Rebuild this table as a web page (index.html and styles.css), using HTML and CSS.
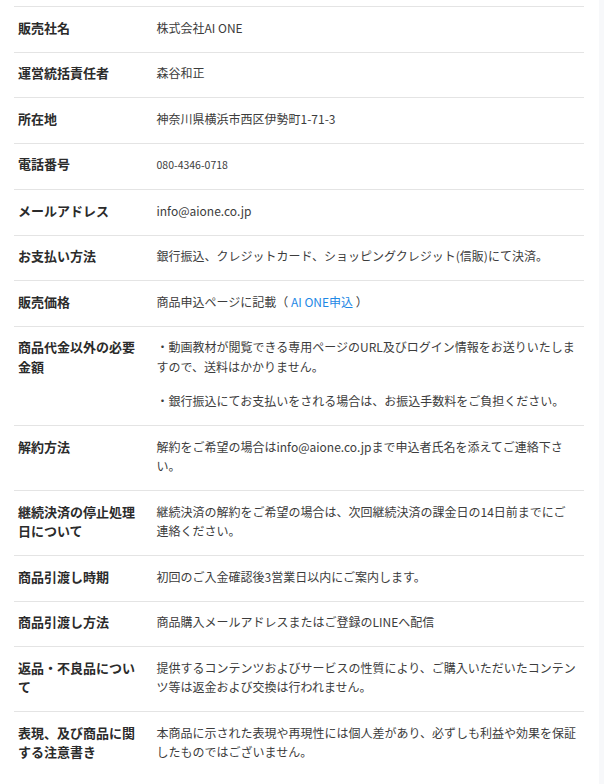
FILE: index.html
```html
<!DOCTYPE html>
<html lang="ja">
<head>
<meta charset="utf-8">
<title>特定商取引法に基づく表記</title>
<link rel="stylesheet" href="styles.css">
</head>
<body>
<div class="page">
  <table class="law">
    <tbody>
      <tr><th>販売社名</th><td>株式会社AI ONE</td></tr>
      <tr><th>運営統括責任者</th><td>森谷和正</td></tr>
      <tr><th>所在地</th><td>神奈川県横浜市西区伊勢町1-71-3</td></tr>
      <tr><th>電話番号</th><td><span class="tel">080-4346-0718</span></td></tr>
      <tr><th>メールアドレス</th><td>info@aione.co.jp</td></tr>
      <tr><th>お支払い方法</th><td>銀行振込、クレジットカード、ショッピングクレジット(信販)にて決済。</td></tr>
      <tr><th>販売価格</th><td>商品申込ページに記載（ <a class="link" href="#">AI ONE申込</a> ）</td></tr>
      <tr><th>商品代金以外の必要金額</th><td><p class="para">・動画教材が閲覧できる専用ページのURL及びログイン情報をお送りいたしますので、送料はかかりません。</p><p class="para">・銀行振込にてお支払いをされる場合は、お振込手数料をご負担ください。</p></td></tr>
      <tr><th>解約方法</th><td>解約をご希望の場合はinfo@aione.co.jpまで申込者氏名を添えてご連絡下さい。</td></tr>
      <tr><th>継続決済の停止処理日について</th><td>継続決済の解約をご希望の場合は、次回継続決済の課金日の14日前までにご連絡ください。</td></tr>
      <tr><th>商品引渡し時期</th><td>初回のご入金確認後3営業日以内にご案内します。</td></tr>
      <tr><th>商品引渡し方法</th><td>商品購入メールアドレスまたはご登録のLINEへ配信</td></tr>
      <tr><th>返品・不良品について</th><td>提供するコンテンツおよびサービスの性質により、ご購入いただいたコンテンツ等は返金および交換は行われません。</td></tr>
      <tr class="last"><th>表現、及び商品に関する注意書き</th><td>本商品に示された表現や再現性には個人差があり、必ずしも利益や効果を保証したものではございません。</td></tr>
    </tbody>
  </table>
</div>
</body>
</html>
```

FILE: styles.css
```css
html, body {
  margin: 0;
  padding: 0;
}
body {
  background: #f7f8fa;
  font-family: "Noto Sans CJK JP", "Noto Sans", sans-serif;
  color: #333;
}
.page {
  width: 599px;
  min-height: 784px;
  background: #fff;
  padding: 6px 15px 0 14px;
  box-sizing: border-box;
}
.law {
  width: 570px;
  border-collapse: collapse;
  table-layout: fixed;
}
.law th,
.law td {
  border-top: 1px solid #e4e4e4;
  padding: 10.5px 0 14.5px;
  vertical-align: top;
  text-align: left;
  line-height: 19.5px;
}
.law th {
  width: 142.5px;
  box-sizing: border-box;
  padding-left: 4px;
  padding-right: 18px;
  font-size: 13px;
  font-weight: 700;
  color: #2b2b2b;
}
.law td {
  padding-right: 7.25px;
  font-size: 12px;
  color: #3c3c3c;
}
.para {
  margin: 0;
}
.para + .para {
  margin-top: 15px;
}
.tel {
  font-size: 10.5px;
}
.link {
  color: #1e88e5;
  text-decoration: none;
}
```
